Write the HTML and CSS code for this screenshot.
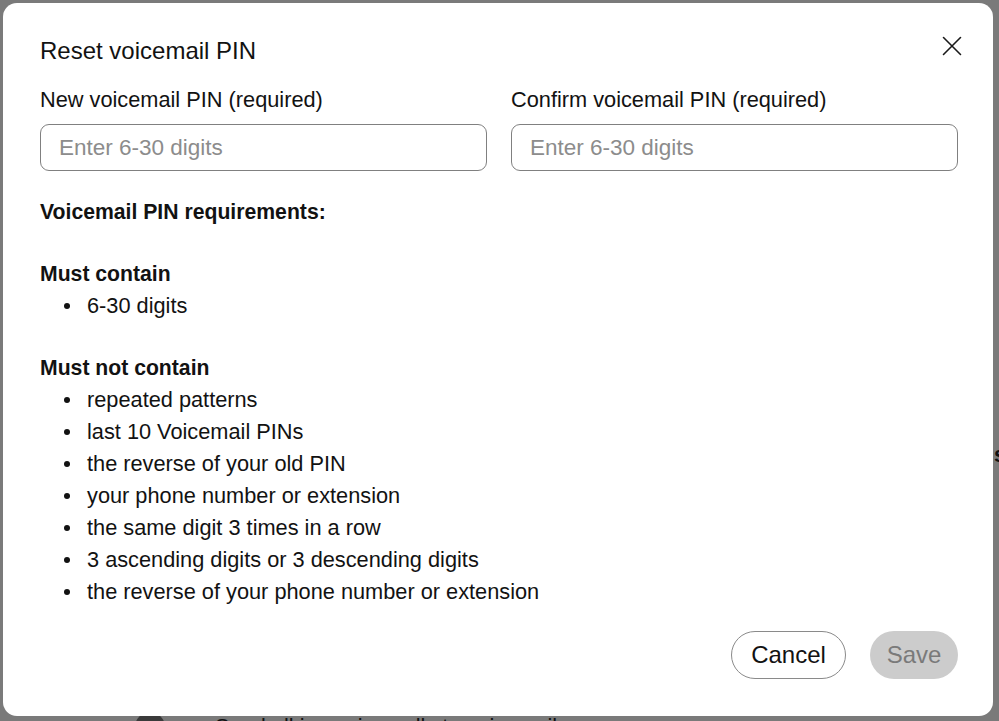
FILE: index.html
```html
<!DOCTYPE html>
<html lang="en">
<head>
<meta charset="utf-8">
<title>Reset voicemail PIN</title>
<link rel="stylesheet" href="styles.css">
</head>
<body>
<div class="page">
  <div class="page-row">
    <span class="toggle-dot"></span>
    <span class="page-text">Send all incoming calls to voicemail</span>
  </div>
</div>
<span class="edge-glyph">s</span>

<div class="dialog" role="dialog" aria-labelledby="dlg-title">
  <div class="dialog-head">
    <h1 id="dlg-title" class="title">Reset voicemail PIN</h1>
    <button class="close" aria-label="Close">
      <svg width="20" height="20" viewBox="0 0 20 20"><path d="M1.5 1.5 L18.5 18.5 M18.5 1.5 L1.5 18.5" stroke="#1a1a1a" stroke-width="1.6" fill="none" stroke-linecap="round"/></svg>
    </button>
  </div>

  <div class="fields">
    <label class="field">
      <span class="label">New voicemail PIN (required)</span>
      <input class="input" type="password" placeholder="Enter 6-30 digits">
    </label>
    <label class="field">
      <span class="label">Confirm voicemail PIN (required)</span>
      <input class="input" type="password" placeholder="Enter 6-30 digits">
    </label>
  </div>

  <div class="reqs">
    <p class="reqs-title">Voicemail PIN requirements:</p>
    <p class="group-title">Must contain</p>
    <ul class="list">
      <li>6-30 digits</li>
    </ul>
    <p class="group-title">Must not contain</p>
    <ul class="list">
      <li>repeated patterns</li>
      <li>last 10 Voicemail PINs</li>
      <li>the reverse of your old PIN</li>
      <li>your phone number or extension</li>
      <li>the same digit 3 times in a row</li>
      <li>3 ascending digits or 3 descending digits</li>
      <li>the reverse of your phone number or extension</li>
    </ul>
  </div>

  <div class="actions">
    <button class="btn btn-cancel">Cancel</button>
    <button class="btn btn-save" disabled>Save</button>
  </div>
</div>
</body>
</html>
```

FILE: styles.css
```css
html, body {
  margin: 0;
  padding: 0;
  height: 100%;
}
body {
  background: #7a7a7a;
  font-family: "Liberation Sans", Arial, sans-serif;
  color: #121212;
  overflow: hidden;
}
.page {
  padding-top: 712px;
}
.page-row {
  display: flex;
  align-items: center;
  gap: 50px;
  padding-left: 135px;
  height: 30px;
}
.toggle-dot {
  width: 30px;
  height: 30px;
  border-radius: 50%;
  background: #3a3a3a;
}
.page-text {
  font-size: 21.75px;
  color: #111;
}
.edge-glyph {
  position: absolute;
  left: 994px;
  top: 442px;
  font-size: 21.75px;
  font-weight: 700;
  color: #111;
}
.dialog {
  position: fixed;
  top: 3px;
  left: 3px;
  width: 990px;
  height: 713px;
  box-sizing: border-box;
  background: #fff;
  border-radius: 14px;
  padding: 26px 35px 0 37px;
  display: flex;
  flex-direction: column;
}
.dialog-head {
  display: flex;
  justify-content: space-between;
  align-items: flex-start;
  margin-bottom: 11px;
}
.title {
  margin: 0;
  font-size: 24px;
  font-weight: 400;
  line-height: 44px;
}
.close {
  border: 0;
  background: none;
  padding: 0;
  margin-top: 4px;
  margin-right: -7px;
  width: 26px;
  height: 26px;
  display: flex;
  align-items: center;
  justify-content: center;
}
.fields {
  display: grid;
  grid-template-columns: 1fr 1fr;
  gap: 24px;
}
.field {
  display: flex;
  flex-direction: column;
}
.label {
  font-size: 21.75px;
  line-height: 32px;
  margin-bottom: 8px;
}
.input {
  height: 47px;
  box-sizing: border-box;
  border: 1px solid #808080;
  border-radius: 9px;
  padding: 0 18px;
  font-family: inherit;
  font-size: 22.5px;
  color: #121212;
  background: #fff;
  outline: none;
}
.input::placeholder {
  color: #8c8c8c;
}
.reqs {
  margin-top: 25px;
  font-size: 21.75px;
  line-height: 32px;
}
.reqs p {
  margin: 0;
}
.reqs-title {
  font-weight: 700;
  font-size: 21.2px;
  margin-bottom: 30px !important;
}
.group-title {
  font-weight: 700;
  font-size: 21.2px;
}
.list {
  margin: 0 0 30px 0;
  padding-left: 24px;
  list-style: none;
}
.list:last-child {
  margin-bottom: 0;
}
.list li {
  display: flex;
  align-items: center;
}
.list li::before {
  content: "";
  width: 6px;
  height: 6px;
  border-radius: 50%;
  background: #121212;
  margin-right: 17px;
  flex: none;
}
.actions {
  margin-top: auto;
  margin-bottom: 37px;
  display: flex;
  justify-content: flex-end;
  gap: 24px;
}
.btn {
  height: 48px;
  border-radius: 24px;
  font-family: inherit;
  font-size: 24px;
  padding: 0;
}
.btn-cancel {
  background: #fff;
  border: 1px solid #8a8a8a;
  color: #121212;
  width: 115px;
}
.btn-save {
  background: #cccccc;
  border: 0;
  color: #7a7a7a;
  width: 88px;
}
```
